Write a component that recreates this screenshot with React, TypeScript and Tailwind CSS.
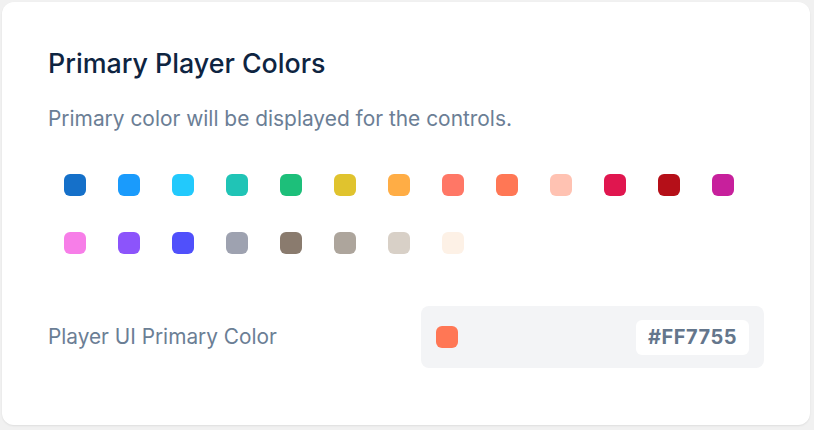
import React from "react";

const colors = [
  "#1570c9",
  "#1a9bfc",
  "#22c9fc",
  "#20c4b6",
  "#1dbf7a",
  "#e0c32e",
  "#ffad45",
  "#ff7766",
  "#ff7755",
  "#ffc2b2",
  "#e0164f",
  "#b50f18",
  "#c7209c",
  "#f77ee8",
  "#8c54fb",
  "#5050fb",
  "#9ea2b0",
  "#8a7b6e",
  "#ada59c",
  "#d8d0c7",
  "#fdf1e6",
];

export default function App() {
  const selected = "#ff7755";

  return (
    <div
      className="h-[430px] w-[814px] bg-[#f1f1f1] pt-[2px] pl-[2px]"
      style={{ fontFamily: "Inter, 'Noto Sans', sans-serif" }}
    >
      <div className="h-[423px] w-[808px] rounded-xl bg-white px-[46px] pt-[45px] shadow-[0_1px_2px_rgba(0,0,0,0.08)]">
        <h2 className="text-[26.8px] leading-8 font-medium text-[#0e2441]">Primary Player Colors</h2>
        <p className="mt-[26px] text-[20.9px] leading-7 text-[#6b7e95]">
          Primary color will be displayed for the controls.
        </p>

        <div className="mt-[41px] flex w-[740px] flex-wrap gap-y-[36px] pl-4">
          {colors.map((c) => (
            <button key={c} className="mr-8 h-[22px] w-[22px] rounded-md" style={{ backgroundColor: c }} />
          ))}
        </div>

        <div className="mt-[52px] flex items-center justify-between">
          <span className="text-[20.8px] text-[#6b7e95]">Player UI Primary Color</span>
          <div className="flex h-[62px] w-[343px] items-center justify-between rounded-lg bg-[#f3f4f6] px-[15px]">
            <span className="h-[22px] w-[22px] rounded-md" style={{ backgroundColor: selected }} />
            <span className="flex h-[35px] items-center rounded-md bg-white px-3 text-xl font-bold tracking-wide text-[#64768c]">
              #FF7755
            </span>
          </div>
        </div>
      </div>
    </div>
  );
}
